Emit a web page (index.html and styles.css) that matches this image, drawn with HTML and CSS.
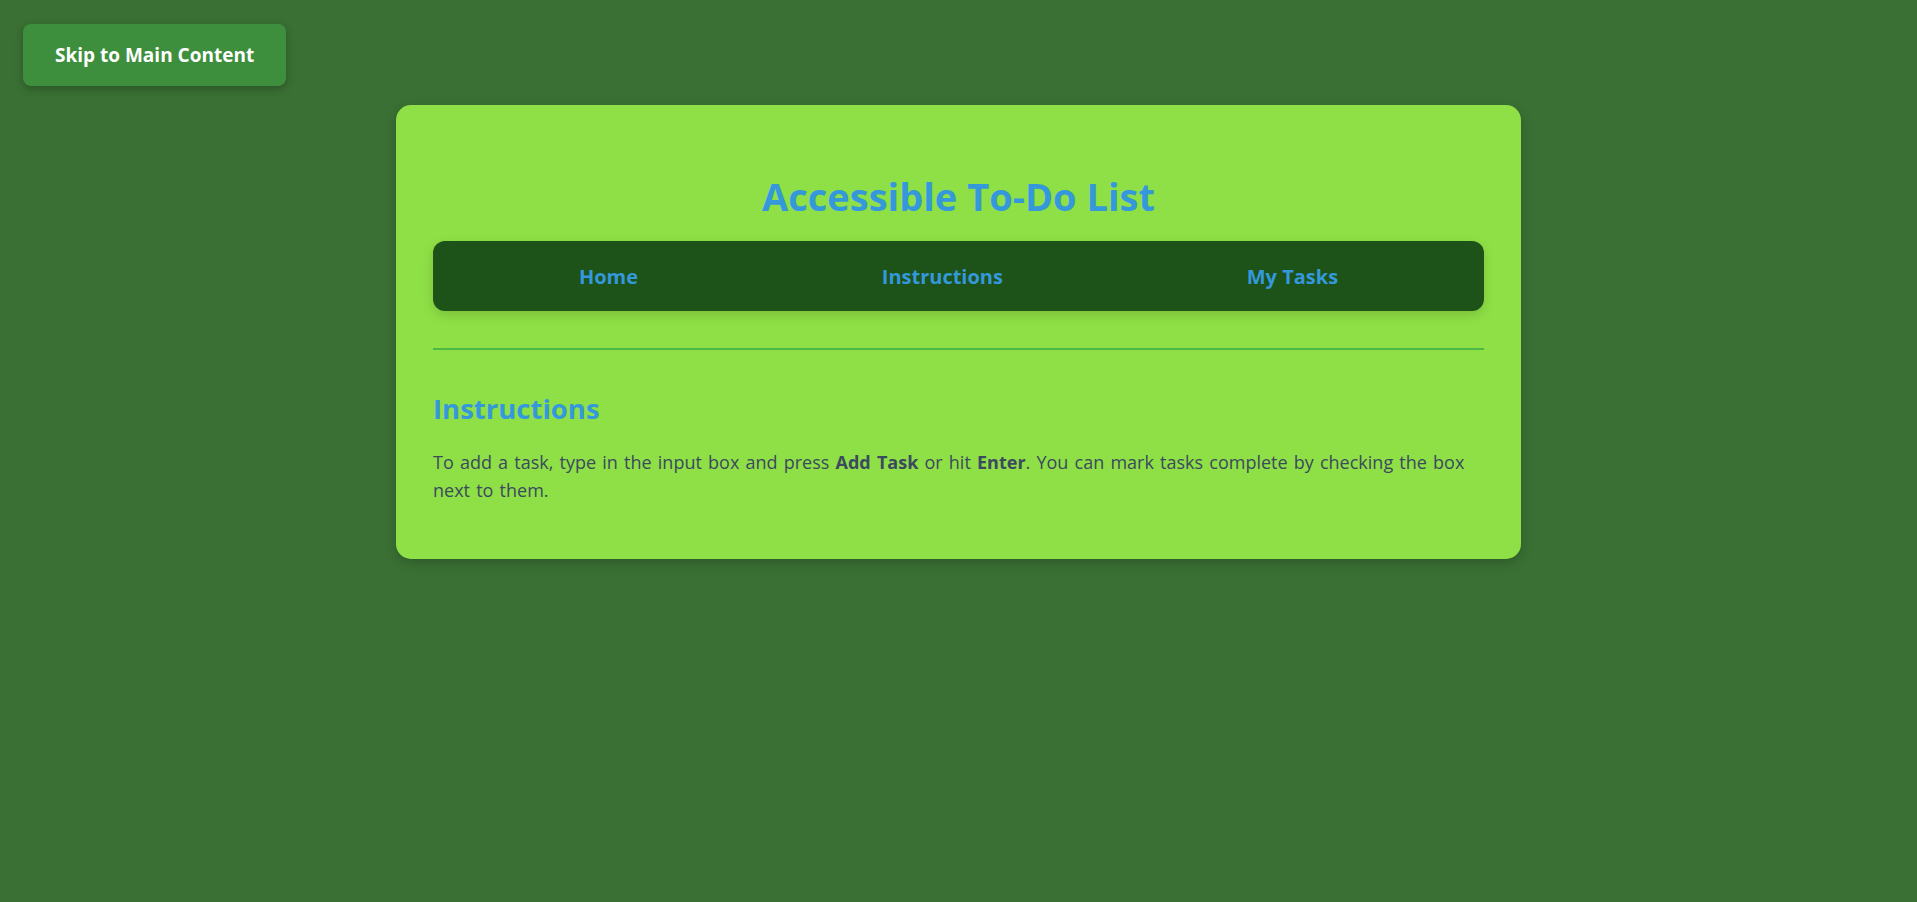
FILE: index.html
```html
<!DOCTYPE html>
<html lang="en">
<head>
<meta charset="utf-8">
<title>Accessible To-Do List</title>
<link rel="stylesheet" href="styles.css">
</head>
<body>
<a class="skip-link" href="#main">Skip to Main Content</a>
<div class="card">
  <header class="header">
    <h1 class="title">Accessible To-Do List</h1>
    <nav class="nav" aria-label="Main navigation">
      <a class="nav-link" href="#home">Home</a>
      <a class="nav-link" href="#instructions">Instructions</a>
      <a class="nav-link" href="#tasks">My Tasks</a>
    </nav>
  </header>
  <hr class="divider">
  <main id="main" class="main">
    <section id="instructions" class="section">
      <h2 class="section-title">Instructions</h2>
      <p class="section-text">To add a task, type in the input box and press <strong>Add Task</strong> or hit <strong>Enter</strong>. You can mark tasks complete by checking the box next to them.</p>
    </section>
  </main>
</div>
</body>
</html>
```

FILE: styles.css
```css
html, body {
  margin: 0;
  padding: 0;
}

body {
  background: #3a7034;
  font-family: "Open Sans", "Noto Sans", "Liberation Sans", sans-serif;
  min-height: 902px;
  padding-top: 105px;
  box-sizing: border-box;
}

.skip-link {
  position: absolute;
  left: 23px;
  top: 24px;
  display: block;
  padding: 19px 32px;
  line-height: 24px;
  font-size: 19px;
  font-weight: 700;
  color: #ffffff;
  text-decoration: none;
  background: #3d8f3d;
  border-radius: 8px;
  box-shadow: 0 3px 8px rgba(0, 0, 0, 0.25);
}

.card {
  width: 1125px;
  box-sizing: border-box;
  margin: 0 auto;
  padding: 37px 37px 55px;
  background: #8fe046;
  border-radius: 15px;
  box-shadow: 0 4px 12px rgba(0, 0, 0, 0.2);
}

.header {
  padding-top: 30px;
}

.title {
  margin: 0 0 21px;
  text-align: center;
  font-size: 38px;
  line-height: 48px;
  font-weight: 700;
  color: #3498db;
}

.nav {
  display: flex;
  justify-content: space-around;
  padding: 23px 24px 21px;
  background: #1d5218;
  border-radius: 12px;
  box-shadow: 0 4px 12px rgba(0, 0, 0, 0.15);
}

.nav-link {
  display: block;
  font-size: 20px;
  line-height: 26px;
  font-weight: 700;
  color: #3498db;
  text-decoration: none;
}

.divider {
  margin: 37px 0 0;
  border: 0;
  height: 2px;
  background: #4cb944;
}

.section-title {
  margin: 42px 0 22px;
  font-size: 27.5px;
  line-height: 34px;
  font-weight: 700;
  color: #3498db;
}

.section-text {
  margin: 0;
  font-size: 18px;
  line-height: 28px;
  word-spacing: 1.5px;
  color: #3b4a5e;
}

.section-text strong {
  font-weight: 700;
}
```
